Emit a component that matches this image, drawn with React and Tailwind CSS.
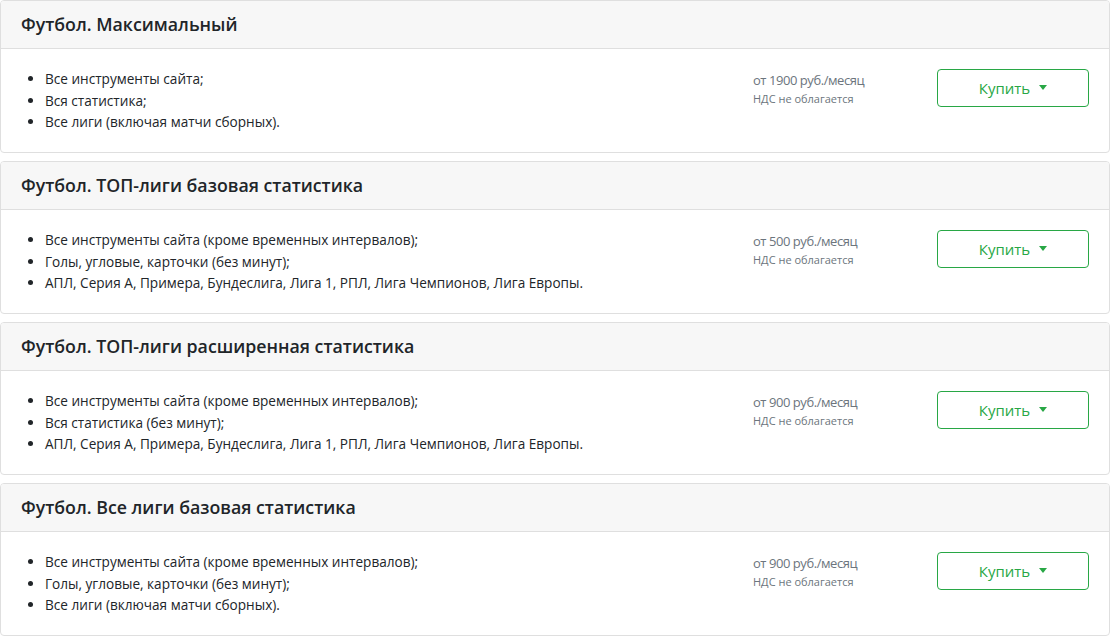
import React from 'react';

const plans = [
    {
        title: 'Футбол. Максимальный',
        items: ['Все инструменты сайта;', 'Вся статистика;', 'Все лиги (включая матчи сборных).'],
        price: 'от 1900 руб./месяц',
    },
    {
        title: 'Футбол. ТОП-лиги базовая статистика',
        items: [
            'Все инструменты сайта (кроме временных интервалов);',
            'Голы, угловые, карточки (без минут);',
            'АПЛ, Серия А, Примера, Бундеслига, Лига 1, РПЛ, Лига Чемпионов, Лига Европы.',
        ],
        price: 'от 500 руб./месяц',
    },
    {
        title: 'Футбол. ТОП-лиги расширенная статистика',
        items: [
            'Все инструменты сайта (кроме временных интервалов);',
            'Вся статистика (без минут);',
            'АПЛ, Серия А, Примера, Бундеслига, Лига 1, РПЛ, Лига Чемпионов, Лига Европы.',
        ],
        price: 'от 900 руб./месяц',
    },
    {
        title: 'Футбол. Все лиги базовая статистика',
        items: [
            'Все инструменты сайта (кроме временных интервалов);',
            'Голы, угловые, карточки (без минут);',
            'Все лиги (включая матчи сборных).',
        ],
        price: 'от 900 руб./месяц',
    },
];

function PlanCard({ plan }) {
    return (
        <div className="border border-[#dfdfdf] rounded-[4px] bg-white overflow-hidden">
            <div className="h-[48px] bg-[#f7f7f7] border-b border-[#dfdfdf] px-5 flex items-center">
                <h2 className="text-[17.75px] font-semibold text-[#212529] leading-none">{plan.title}</h2>
            </div>
            <div className="flex items-start px-5 pt-5 pb-5 h-[103px]">
                <ul className="flex-1 pl-6 list-disc text-[13.6px] leading-[21.5px] text-[#212529] -mt-[1px]">
                    {plan.items.map((item) => (
                        <li key={item}>{item}</li>
                    ))}
                </ul>
                <div className="w-[184px] pt-[1px] -ml-[1px]">
                    <div className="text-[13px] tracking-[-0.45px] leading-[20px] text-[#6c757d]">{plan.price}</div>
                    <div className="text-[11px] leading-[18px] text-[#6c757d]">НДС не облагается</div>
                </div>
                <button
                    type="button"
                    className="w-[152px] h-[38px] border border-[#28a745] rounded-[4px] text-[#28a745] text-[15px] flex items-center justify-center gap-[9px] bg-white"
                >
                    Купить
                    <span className="w-0 h-0 border-l-[4px] border-r-[4px] border-t-[5px] border-l-transparent border-r-transparent border-t-[#28a745] mb-[2px]" />
                </button>
            </div>
        </div>
    );
}

export default function App() {
    return (
        <div className="w-[1110px] min-h-[636px] bg-white flex flex-col gap-[8px] font-['Open_Sans',sans-serif]">
            {plans.map((plan) => (
                <PlanCard key={plan.title} plan={plan} />
            ))}
        </div>
    );
}
